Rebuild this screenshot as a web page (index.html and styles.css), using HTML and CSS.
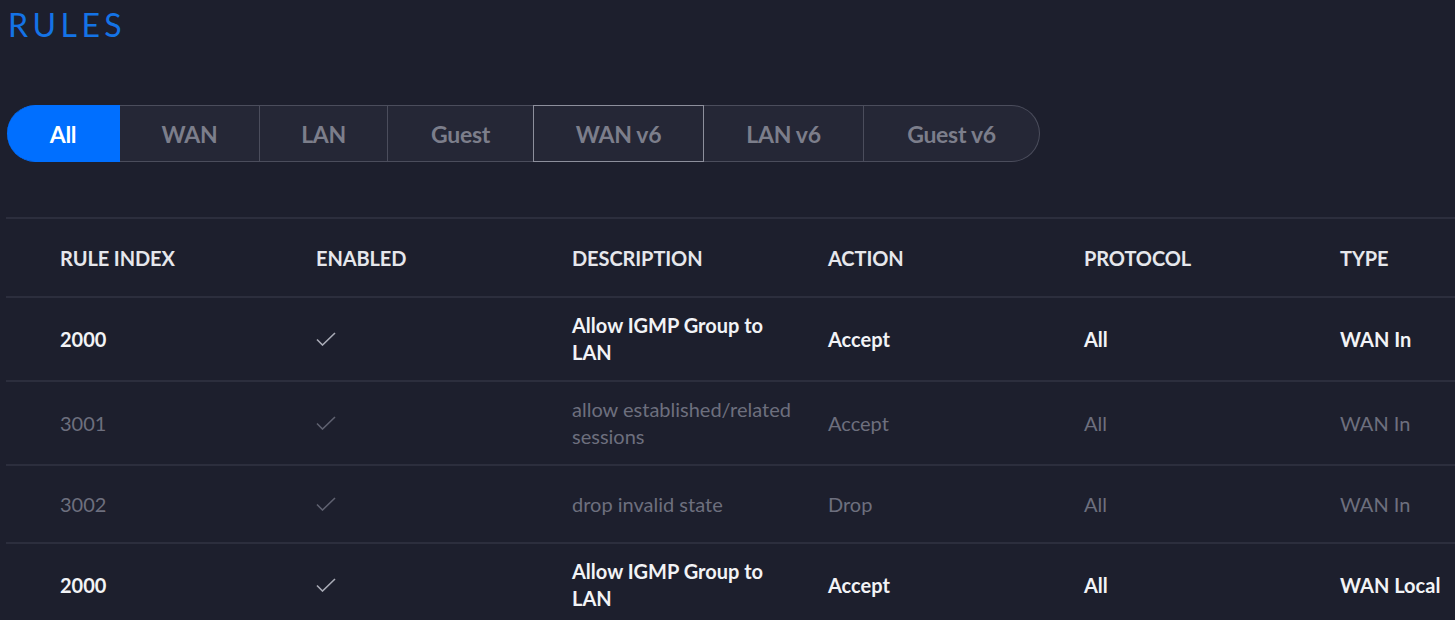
FILE: index.html
```html
<!DOCTYPE html>
<html lang="en">
<head>
  <meta charset="UTF-8">
  <meta name="viewport" content="width=device-width, initial-scale=1.0">
  <title>Rules</title>
  <link rel="stylesheet" href="styles.css">
</head>
<body>
  <h1 class="page-title">RULES</h1>

  <nav class="tabs">
    <a class="tab active" href="#">All</a>
    <a class="tab" href="#">WAN</a>
    <a class="tab" href="#">LAN</a>
    <a class="tab" href="#">Guest</a>
    <a class="tab focused" href="#">WAN v6</a>
    <a class="tab" href="#">LAN v6</a>
    <a class="tab last" href="#">Guest v6</a>
  </nav>

  <table class="rules-table">
    <colgroup>
      <col class="col-first">
      <col class="col">
      <col class="col">
      <col class="col">
      <col class="col">
      <col class="col-last">
    </colgroup>
    <thead>
      <tr>
        <th>Rule Index</th>
        <th>Enabled</th>
        <th>Description</th>
        <th>Action</th>
        <th>Protocol</th>
        <th>Type</th>
      </tr>
    </thead>
    <tbody>
      <tr class="custom">
        <td>2000</td>
        <td><svg class="check" width="20" height="14" viewBox="0 0 20 14"><polyline points="1,7.5 6.5,13 19,1" /></svg></td>
        <td>Allow IGMP Group to LAN</td>
        <td>Accept</td>
        <td>All</td>
        <td>WAN In</td>
      </tr>
      <tr class="predefined">
        <td>3001</td>
        <td><svg class="check" width="20" height="14" viewBox="0 0 20 14"><polyline points="1,7.5 6.5,13 19,1" /></svg></td>
        <td>allow established/related sessions</td>
        <td>Accept</td>
        <td>All</td>
        <td>WAN In</td>
      </tr>
      <tr class="predefined short">
        <td>3002</td>
        <td><svg class="check" width="20" height="14" viewBox="0 0 20 14"><polyline points="1,7.5 6.5,13 19,1" /></svg></td>
        <td>drop invalid state</td>
        <td>Drop</td>
        <td>All</td>
        <td>WAN In</td>
      </tr>
      <tr class="custom">
        <td>2000</td>
        <td><svg class="check" width="20" height="14" viewBox="0 0 20 14"><polyline points="1,7.5 6.5,13 19,1" /></svg></td>
        <td>Allow IGMP Group to LAN</td>
        <td>Accept</td>
        <td>All</td>
        <td>WAN Local</td>
      </tr>
    </tbody>
  </table>
</body>
</html>
```

FILE: styles.css
```css
body {
  margin: 0;
  padding: 0 0 0 6px;
  background-color: #1d1f2d;
  font-family: Lato, "Open Sans", sans-serif;
  overflow: hidden;
}

.page-title {
  margin: 0;
  padding: 5px 0 0 2px;
  height: 60px;
  box-sizing: border-box;
  font-size: 32px;
  font-weight: 400;
  letter-spacing: 4.5px;
  line-height: 40px;
  color: #1473e6;
}

/* segmented tabs */
.tabs {
  display: flex;
  margin: 45px 0 0 1px;
  height: 57px;
}

.tab {
  display: flex;
  align-items: center;
  justify-content: center;
  box-sizing: border-box;
  height: 57px;
  background-color: #252736;
  border: 1px solid #4b4d5c;
  border-left: none;
  color: #7c7e8b;
  font-size: 23px;
  font-weight: 700;
  letter-spacing: -0.3px;
  text-decoration: none;
}

.tab:nth-child(1) { width: 113px; }
.tab:nth-child(2) { width: 140px; }
.tab:nth-child(3) { width: 128px; }
.tab:nth-child(4) { width: 146px; }
.tab:nth-child(5) { width: 170px; }
.tab:nth-child(6) { width: 160px; }
.tab:nth-child(7) { width: 176px; }

.tab.active {
  background-color: #006fff;
  border-color: #006fff;
  color: #fff;
  border-radius: 29px 0 0 29px;
}

.tab.focused {
  border: 1px solid #8d8f9c;
  margin-left: -1px;
  width: 171px;
}

.tab.last {
  border-radius: 0 29px 29px 0;
}

/* rules table */
.rules-table {
  margin-top: 55px;
  border-collapse: collapse;
  table-layout: fixed;
  width: 1449px;
}

.col-first { width: 310px; }
.col { width: 256px; }
.col-last { width: 115px; }

.rules-table th,
.rules-table td {
  text-align: left;
  padding: 0 26px 0 0;
  border-top: 2px solid #2c2e3d;
  vertical-align: middle;
}

.rules-table th:first-child,
.rules-table td:first-child {
  padding-left: 54px;
}

.rules-table th:last-child,
.rules-table td:last-child {
  padding-right: 0;
  white-space: nowrap;
}

.rules-table th {
  height: 77px;
  font-size: 20px;
  font-weight: 700;
  letter-spacing: -0.1px;
  text-transform: uppercase;
  color: #e6e7ec;
}

.rules-table td {
  height: 82px;
  font-size: 20px;
  line-height: 27px;
}

.rules-table tr.predefined td {
  color: #6d6f7e;
  font-weight: 400;
}

.rules-table tr.short td {
  height: 76px;
}

.rules-table tr.custom td {
  color: #f2f3f6;
  font-weight: 700;
}

.check {
  display: block;
  fill: none;
  stroke-width: 1.6;
}

.custom .check { stroke: #a9abb6; }
.predefined .check { stroke: #5f6170; }
```
